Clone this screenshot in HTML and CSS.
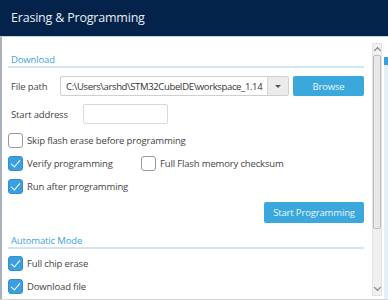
FILE: index.html
```html
<!DOCTYPE html>
<html lang="en">
<head>
    <meta charset="UTF-8">
    <title>Erasing &amp; Programming</title>
    <link rel="stylesheet" href="styles.css">
</head>
<body>
    <div class="window">
        <div class="title-bar">Erasing &amp; Programming</div>

        <div class="main">
            <div class="panel">
                <div class="group-title">Download</div>

                <div class="row first">
                    <span class="label">File path</span>
                    <div class="combo">
                        <span class="combo-text">C:\Users\arshd\STM32CubeIDE\workspace_1.14</span>
                        <span class="combo-arrow"></span>
                    </div>
                    <button class="btn browse">Browse</button>
                </div>

                <div class="row">
                    <span class="label addr">Start address</span>
                    <div class="input"></div>
                </div>

                <label class="check"><span class="box"></span>Skip flash erase before programming</label>
                <div class="check-row">
                    <label class="check wide"><span class="box on"></span>Verify programming</label>
                    <label class="check"><span class="box"></span>Full Flash memory checksum</label>
                </div>
                <label class="check"><span class="box on"></span>Run after programming</label>

                <div class="actions">
                    <button class="btn start">Start Programming</button>
                </div>

                <div class="group-title auto">Automatic Mode</div>
                <label class="check tight"><span class="box on"></span>Full chip erase</label>
                <label class="check"><span class="box on"></span>Download file</label>
            </div>

            <div class="scrollbar">
                <span class="arrow up"></span>
                <div class="thumb"></div>
                <span class="arrow down"></span>
            </div>

            <div class="side"></div>
        </div>
    </div>
</body>
</html>
```

FILE: styles.css
```css
body {
    margin: 0;
    font-family: "Open Sans", "Noto Sans", sans-serif;
    background: #ffffff;
    color: #444444;
    overflow: hidden;
}
.window {
    width: 388px;
    height: 300px;
    overflow: hidden;
}
.title-bar {
    height: 37px;
    box-sizing: border-box;
    padding-left: 11px;
    line-height: 36px;
    background-color: #03234b;
    color: #e9eef4;
    font-size: 12.5px;
    letter-spacing: -0.2px;
    border-bottom: 1px solid #c9d0d8;
}
.main {
    display: flex;
    height: 263px;
    border-bottom: 1px solid #d6d6d6;
    box-sizing: border-box;
    font-size: 9.5px;
    letter-spacing: -0.15px;
}
.panel {
    width: 356px;
    padding: 0 8px 0 6px;
    border-left: 2px solid #a7b0bb;
}
.group-title {
    margin-top: 16px;
    padding-left: 3px;
    height: 13px;
    line-height: 13px;
    color: #3ba3dc;
    border-bottom: 2px solid #d3e5f1;
}
.group-title.auto {
    margin-top: 11px;
}
.row {
    display: flex;
    align-items: center;
    height: 20px;
    margin-top: 8px;
}
.label {
    width: 49px;
    padding-left: 3px;
}
.label.addr {
    width: 72px;
}
.combo {
    width: 229px;
    height: 20px;
    box-sizing: border-box;
    border: 1px solid #cfcfcf;
    border-radius: 2px;
    display: flex;
    align-items: center;
}
.combo-text {
    flex: 1;
    padding-left: 5px;
    color: #333333;
    letter-spacing: -0.35px;
    white-space: nowrap;
    overflow: hidden;
}
.combo-arrow {
    width: 20px;
    height: 18px;
    background: #ebebeb;
    border-left: 1px solid #d6d6d6;
    position: relative;
}
.combo-arrow::after {
    content: "";
    position: absolute;
    left: 7px;
    top: 8px;
    border-left: 3px solid transparent;
    border-right: 3px solid transparent;
    border-top: 3px solid #555555;
}
.btn {
    border: none;
    border-radius: 2px;
    background-color: #3aa8dd;
    color: #eaf5fb;
    font-family: inherit;
    font-size: inherit;
    letter-spacing: inherit;
    padding: 0;
    height: 20px;
}
.browse {
    width: 71px;
    margin-left: 4px;
}
.input {
    width: 85px;
    height: 20px;
    box-sizing: border-box;
    border: 1px solid #d9d9d9;
    border-radius: 2px;
}
.check {
    display: flex;
    align-items: center;
    height: 15px;
    margin-top: 8px;
    color: #444444;
}
.row + .check {
    margin-top: 9px;
}
.check.tight {
    margin-top: 7px;
}
.check-row {
    display: flex;
    margin-top: 8px;
}
.check-row .check {
    margin-top: 0;
}
.check.wide {
    width: 133px;
}
.box {
    width: 15px;
    height: 15px;
    box-sizing: border-box;
    border: 1px solid #9a9a9a;
    border-radius: 3px;
    background: #ffffff;
    margin-right: 4px;
    position: relative;
}
.box.on {
    background: #3b9fe0;
    border-color: #3390d0;
}
.box.on::after {
    content: "";
    position: absolute;
    left: 4px;
    top: 1px;
    width: 4px;
    height: 8px;
    border-right: 1.5px solid #ffffff;
    border-bottom: 1.5px solid #ffffff;
    transform: rotate(40deg);
}
.actions {
    display: flex;
    justify-content: flex-end;
    margin-top: 8px;
}
.start {
    width: 100px;
    height: 21px;
}
.scrollbar {
    width: 10px;
    margin-top: 6px;
    height: 253px;
    box-sizing: border-box;
    background: #f0f0f0;
    border: 1px solid #e2e2e2;
    display: flex;
    flex-direction: column;
    align-items: center;
}
.arrow {
    width: 4px;
    height: 4px;
    border-left: 1px solid #777777;
    border-top: 1px solid #777777;
    margin-top: 4px;
    transform: rotate(45deg);
}
.arrow.down {
    transform: rotate(225deg);
    margin-top: auto;
    margin-bottom: 5px;
}
.thumb {
    width: 8px;
    height: 174px;
    box-sizing: border-box;
    margin-top: 2px;
    background: #e8e8e8;
    border: 1px solid #bdbdbd;
    border-radius: 2px;
}
.side {
    width: 4px;
    margin-left: 2px;
    margin-top: 20px;
    background: #e4f0f8;
    border-top: 8px solid #3aa0dc;
}
```
